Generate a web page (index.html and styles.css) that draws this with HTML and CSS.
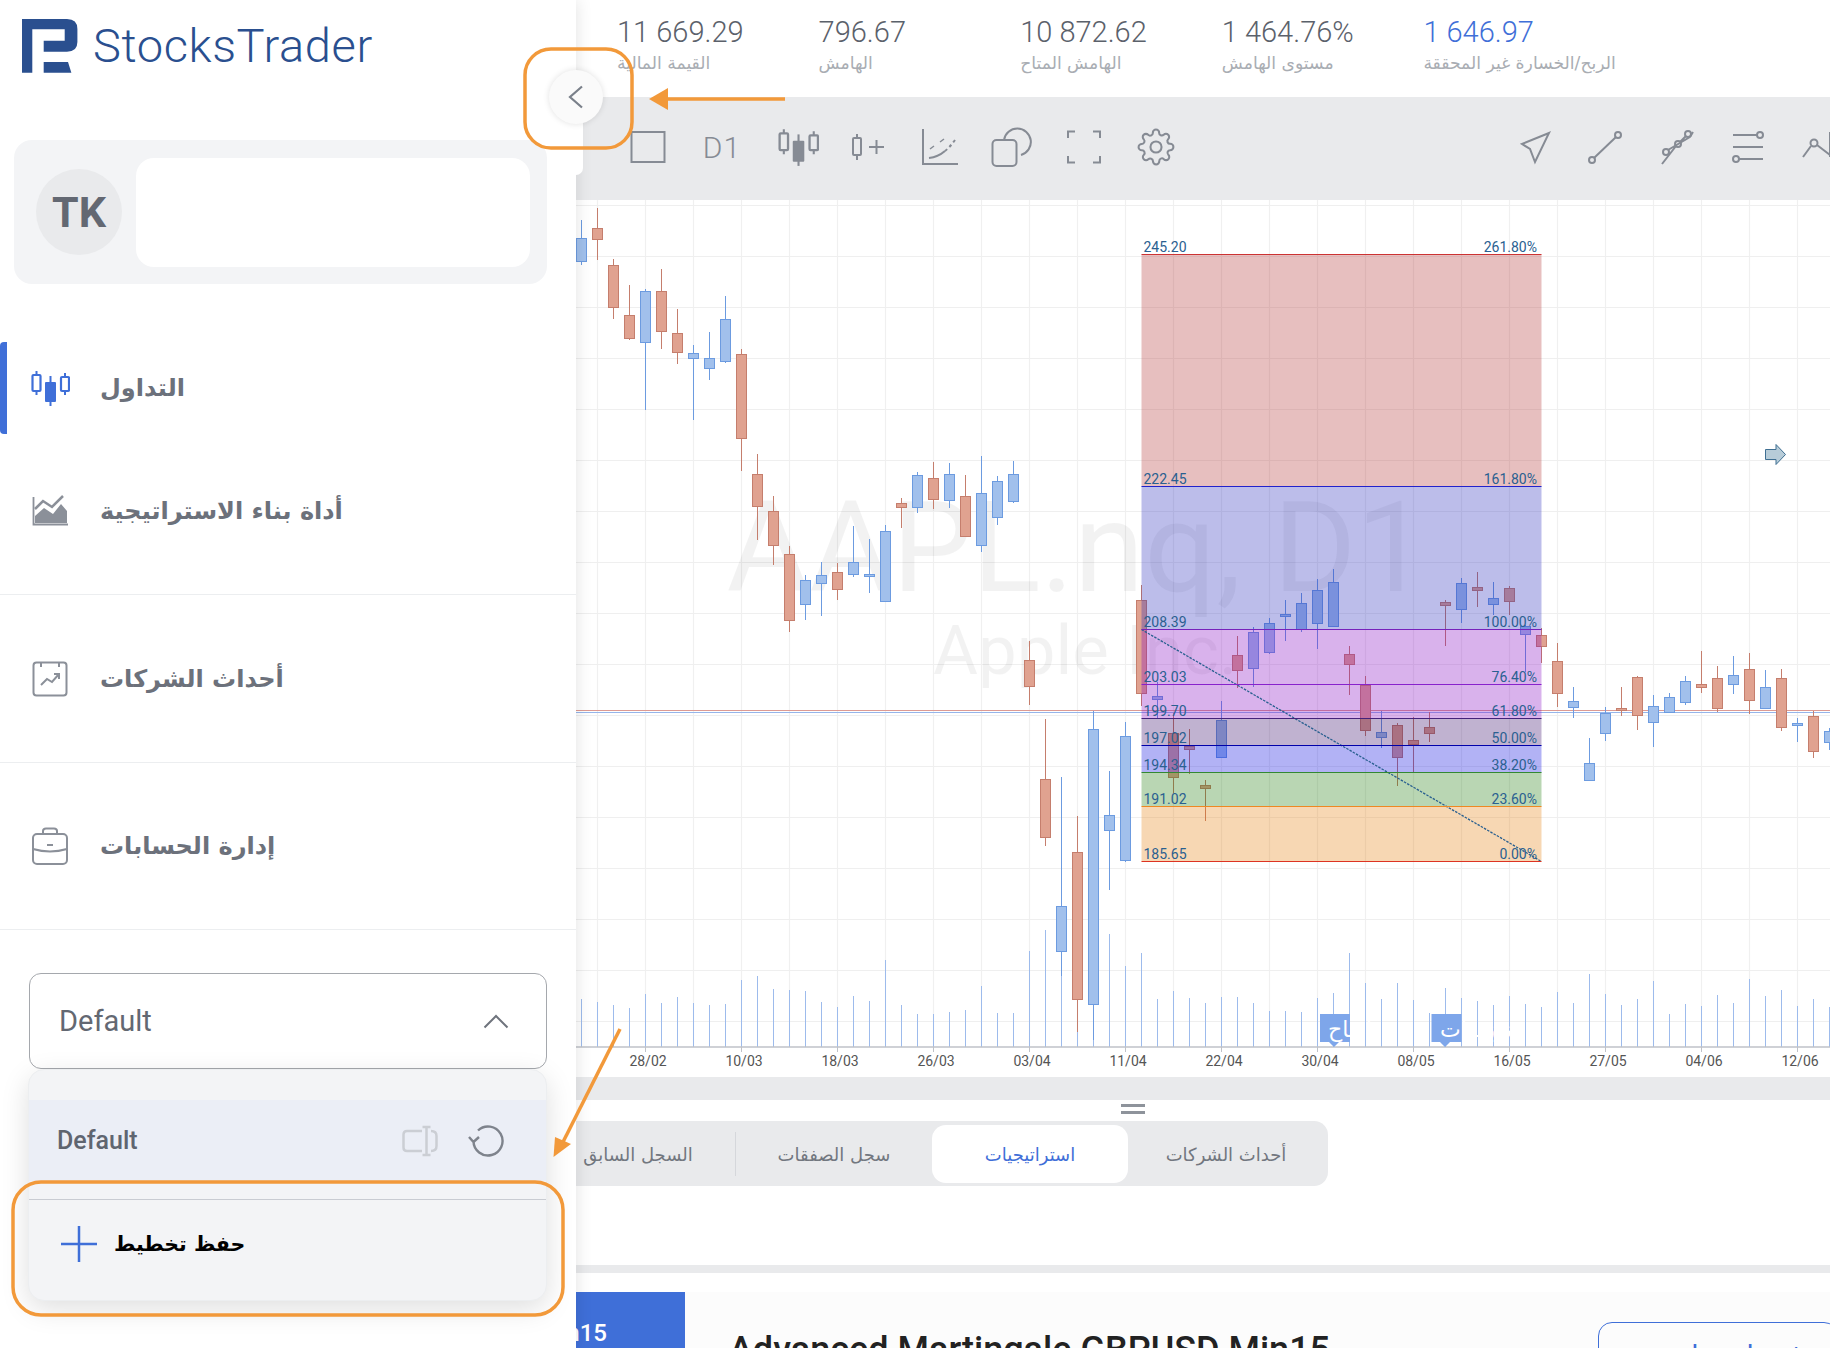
FILE: index.html
```html
<!DOCTYPE html>
<html lang="ar">
<head>
  <meta charset="UTF-8">
  <meta name="viewport" content="width=device-width, initial-scale=1.0">
  <title>StocksTrader</title>
  <link rel="stylesheet" href="styles.css">
</head>
<body>
  <svg class="icon-defs" width="0" height="0">
    <symbol id="ic-candles" viewBox="0 0 40 40">
      <path d="M6.5 3V7M6.5 23V27M35 5V9M35 23V27" fill="none" stroke="currentColor" stroke-width="2"/>
      <rect x="2.5" y="7" width="8" height="16" rx="1" fill="none" stroke="currentColor" stroke-width="2.2"/>
      <rect x="31" y="9" width="8" height="14" rx="1" fill="none" stroke="currentColor" stroke-width="2.2"/>
      <path d="M20.5 8V38" stroke="currentColor" stroke-width="2"/>
      <rect x="15" y="14" width="11" height="20" rx="1" fill="currentColor"/>
    </symbol>
  </svg>

  <aside class="sidebar">
    <div class="logo">
      <svg class="logo-mark" width="56" height="54" viewBox="0 0 56 54">
        <path d="M0 0H45Q55.4 0 55.4 10V23Q55.4 32.7 45 32.7H21.7V21.7H42.7V10.3H10.3V53.7H0Z"/>
        <path d="M21.7 43H46L49.4 53.7H21.7Z"/>
      </svg>
      <span class="logo-text">StocksTrader</span>
    </div>

    <div class="profile">
      <div class="avatar">TK</div>
      <div class="profile-box"></div>
    </div>

    <nav class="nav">
      <div class="nav-group">
        <a class="nav-item active">
          <svg class="nav-icon" width="40" height="40"><use href="#ic-candles"/></svg>
          <span dir="rtl">التداول</span>
        </a>
        <a class="nav-item">
          <svg class="nav-icon" width="40" height="40" viewBox="0 0 40 40">
            <path d="M3.500 6V33.500H38" fill="none" stroke="currentColor" stroke-width="1.800"/>
            <path d="M5 32V25L14 17L23 23L31 13L37 20V32Z" fill="currentColor"/>
            <path d="M5 18L13 10L22 16L33 5" fill="none" stroke="currentColor" stroke-width="2.500"/>
          </svg>
          <span dir="rtl">أداة بناء الاستراتيجية</span>
        </a>
      </div>
      <a class="nav-item nav-row">
        <svg class="nav-icon" width="40" height="40" viewBox="0 0 40 40">
          <rect x="3.500" y="3.500" width="33" height="33" rx="3" fill="none" stroke="currentColor" stroke-width="2"/>
          <path d="M11 3V8M29 3V8" stroke="currentColor" stroke-width="2"/>
          <path d="M11 26L17 20L22 23L29 15M24 15H29V20" fill="none" stroke="currentColor" stroke-width="2"/>
        </svg>
        <span dir="rtl">أحداث الشركات</span>
      </a>
      <a class="nav-item nav-row">
        <svg class="nav-icon" width="40" height="40" viewBox="0 0 40 40">
          <rect x="3" y="8" width="34" height="30" rx="4" fill="none" stroke="currentColor" stroke-width="2"/>
          <path d="M13 8V5Q13 2.500 16 2.500H24Q27 2.500 27 5V8M3 23Q20 28 37 23M17 19H23" fill="none" stroke="currentColor" stroke-width="2"/>
        </svg>
        <span dir="rtl">إدارة الحسابات</span>
      </a>
    </nav>

    <div class="layout-select">
      <div class="select-box">
        <span>Default</span>
        <svg width="26" height="15" viewBox="0 0 26 15"><path d="M1.500 13.500L13 2L24.500 13.500" fill="none" stroke="#6f747d" stroke-width="2"/></svg>
      </div>
      <div class="select-menu">
        <div class="menu-item">
          <span class="menu-name">Default</span>
          <svg class="rename" width="36" height="32" viewBox="0 0 36 32">
            <path d="M20 6H5Q1.500 6 1.500 9.500V22.500Q1.500 26 5 26H20M29 6Q34.500 6 34.500 11V21Q34.500 26 29 26M24.500 2V30M20.500 2H28.500M20.500 30H28.500" fill="none" stroke="#cbced4" stroke-width="2.500"/>
          </svg>
          <svg class="reset" width="36" height="32" viewBox="0 0 36 32">
            <path d="M5.500 16A14.500 14.500 0 1 0 10 5.500M1 12L5.500 17L11 12" fill="none" stroke="#7e838c" stroke-width="2.400"/>
          </svg>
        </div>
        <div class="menu-add">
          <svg width="36" height="36" viewBox="0 0 36 36"><path d="M18 0V36M0 18H36" stroke="#3f6fd8" stroke-width="2.500"/></svg>
          <span dir="rtl">حفظ تخطيط</span>
        </div>
      </div>
    </div>

    <div class="sidebar-tab"></div>
    <div class="collapse-btn">
      <svg width="16" height="24" viewBox="0 0 16 24"><path d="M14 1.500L2 12L14 22.500" fill="none" stroke="#7a808a" stroke-width="2.200"/></svg>
    </div>
  </aside>

  <main class="main">
    <header class="stats">
      <div class="stat"><div class="stat-value">11 669.29</div><div class="stat-label"><span dir="rtl">القيمة المالية</span></div></div>
      <div class="stat"><div class="stat-value">796.67</div><div class="stat-label"><span dir="rtl">الهامش</span></div></div>
      <div class="stat"><div class="stat-value">10 872.62</div><div class="stat-label"><span dir="rtl">الهامش المتاح</span></div></div>
      <div class="stat"><div class="stat-value">1 464.76%</div><div class="stat-label"><span dir="rtl">مستوى الهامش</span></div></div>
      <div class="stat"><div class="stat-value blue">1 646.97</div><div class="stat-label"><span dir="rtl">الربح/الخسارة غير المحققة</span></div></div>
    </header>

    <div class="toolbar">
      <div class="tool tool-first"><svg width="40" height="40" viewBox="0 0 40 40"><rect x="3.500" y="5" width="33" height="30"/></svg></div>
      <div class="tool tool-text">D1</div>
      <div class="tool"><svg class="filled-use" width="42" height="42"><use href="#ic-candles"/></svg></div>
      <div class="tool"><svg width="40" height="40" viewBox="0 0 40 40"><rect x="5" y="11" width="8" height="17" rx="1"/><path d="M9 7V11M9 28V33M21 20H36M28.500 13V27"/></svg></div>
      <div class="tool"><svg width="40" height="40" viewBox="0 0 40 40"><path d="M3 2V37H38"/><path d="M9 31Q18 30 25 24" /><path d="M25 24Q30 20 35 13" stroke-dasharray="3 3"/><path d="M10 22L14 19M20 15L24 12" stroke-width="1.500"/></svg></div>
      <div class="tool"><svg width="42" height="42" viewBox="0 0 42 42"><rect x="1.500" y="14" width="24" height="26" rx="4"/><path d="M13 14A13.500 13.500 0 1 1 30 29"/></svg></div>
      <div class="tool"><svg width="40" height="40" viewBox="0 0 40 40"><path d="M4 11V4.500H11M29 4.500H36V11M36 29V35.500H29M11 35.500H4V29"/></svg></div>
      <div class="tool"><svg width="38" height="38" viewBox="0 0 24 24" class="thin"><circle cx="12" cy="12" r="3.500"/><path d="M19.400 15a1.650 1.650 0 0 0 .33 1.820l.06.06a2 2 0 0 1 0 2.830 2 2 0 0 1-2.830 0l-.06-.06a1.650 1.650 0 0 0-1.820-.33 1.650 1.650 0 0 0-1 1.510V21a2 2 0 0 1-2 2 2 2 0 0 1-2-2v-.09A1.650 1.650 0 0 0 9 19.400a1.650 1.650 0 0 0-1.820.33l-.06.06a2 2 0 0 1-2.830 0 2 2 0 0 1 0-2.830l.06-.06a1.650 1.650 0 0 0 .33-1.820 1.650 1.650 0 0 0-1.510-1H3a2 2 0 0 1-2-2 2 2 0 0 1 2-2h.09A1.650 1.650 0 0 0 4.600 9a1.650 1.650 0 0 0-.33-1.820l-.06-.06a2 2 0 0 1 0-2.830 2 2 0 0 1 2.830 0l.06.06a1.650 1.650 0 0 0 1.820.33H9a1.650 1.650 0 0 0 1-1.510V3a2 2 0 0 1 2-2 2 2 0 0 1 2 2v.09a1.650 1.650 0 0 0 1 1.510 1.650 1.650 0 0 0 1.820-.33l.06-.06a2 2 0 0 1 2.830 0 2 2 0 0 1 0 2.830l-.06.06a1.650 1.650 0 0 0-.33 1.820V9a1.650 1.650 0 0 0 1.510 1H21a2 2 0 0 1 2 2 2 2 0 0 1-2 2h-.09a1.650 1.650 0 0 0-1.510 1z"/></svg></div>

      <div class="tools-right">
        <div class="tool"><svg width="40" height="40" viewBox="0 0 40 40"><path d="M35 6L8 17L16 22L21 35Z"/></svg></div>
        <div class="tool"><svg width="40" height="40" viewBox="0 0 40 40"><circle cx="7" cy="33" r="3"/><circle cx="33" cy="8" r="3"/><path d="M9 31L31 10"/></svg></div>
        <div class="tool"><svg width="40" height="40" viewBox="0 0 40 40"><circle cx="9" cy="25" r="3"/><circle cx="31" cy="7" r="3"/><circle cx="21" cy="17" r="3"/><path d="M5 37L19 19M23 15L29 9M11 23L33 10M33 10L36 5"/></svg></div>
        <div class="tool"><svg width="40" height="40" viewBox="0 0 40 40"><circle cx="32" cy="8" r="3"/><circle cx="8" cy="32" r="3"/><path d="M5 8H29M5 20H35M11 32H35"/></svg></div>
        <div class="tool"><svg width="40" height="40" viewBox="0 0 40 40"><circle cx="14" cy="16" r="3.500"/><path d="M3 30L11 19M17 18L30 28M30 5V30"/></svg></div>
      </div>
    </div>

    <section class="chart">
      <svg id="chart-svg" width="1254" height="877" viewBox="576 200 1254 877"></svg>
    </section>

    <div class="band"></div>

    <section class="panel">
      <div class="handle"></div>
      <div class="tabs" dir="rtl">
        <div class="tab">أحداث الشركات</div>
        <div class="tab active">استراتيجيات</div>
        <div class="tab">سجل الصفقات</div>
        <div class="tab tab-sep">السجل السابق</div>
      </div>
    </section>

    <div class="band thin"></div>

    <section class="strategy">
      <div class="strategy-badge"><span>Min15</span></div>
      <div class="strategy-title">Advanced Martingale GBPUSD Min15</div>
      <div class="strategy-btn" dir="rtl">فتح استراتيجية</div>
    </section>
  </main>

  <!-- help arrows and frames drawn over the screenshot -->
  <svg class="marks" width="1830" height="1348" viewBox="0 0 1830 1348">
    <rect x="525" y="49" width="107" height="99" rx="26"/>
    <rect x="13" y="1182" width="550" height="133" rx="28"/>
    <path d="M785 99H664"/>
    <path class="head" d="M649 99L668 88V110Z"/>
    <path d="M620 1029L563 1142"/>
    <path class="head" d="M553.500 1157L571 1144L555 1137Z"/>
  </svg>

  <script src="chart.js"></script>
</body>
</html>
```

FILE: styles.css
```css
* {
  box-sizing: border-box;
}
html, body {
  margin: 0;
  height: 1348px;
  overflow: hidden;
}
body {
  display: flex;
  position: relative;
  background-color: white;
  color: #5f6570;
  font-family: Roboto, "DejaVu Sans", sans-serif;
}
.icon-defs {
  position: absolute;
}

/* sidebar */
.sidebar {
  position: relative;
  z-index: 2;
  flex: 0 0 576px;
  background-color: white;
  box-shadow: 0 0 16px rgba(0, 0, 0, 0.12);
}
.logo {
  display: flex;
  align-items: flex-start;
  gap: 15px;
  height: 140px;
  padding: 19px 0 0 22px;
}
.logo-mark {
  fill: #2a4f8f;
}
.logo-text {
  color: #2a4f8f;
  font-size: 47px;
  font-weight: 300;
  line-height: 54px;
  letter-spacing: 0.6px;
}
.profile {
  display: flex;
  align-items: center;
  gap: 14px;
  height: 144px;
  margin-left: 14px;
  width: 533px;
  padding: 0 17px 0 22px;
  background-color: #f3f4f6;
  border-radius: 18px;
}
.avatar {
  display: flex;
  align-items: center;
  justify-content: center;
  flex: 0 0 86px;
  height: 86px;
  border-radius: 50%;
  background-color: #e9eaec;
  color: #636872;
  font-size: 43px;
  font-weight: 700;
}
.profile-box {
  flex: 1;
  height: 109px;
  background-color: white;
  border-radius: 18px;
}
.nav {
  margin-top: 58px;
}
.nav-group {
  display: flex;
  flex-direction: column;
  gap: 31px;
  padding-bottom: 37px;
}
.nav-item {
  display: flex;
  align-items: center;
  gap: 30px;
  height: 92px;
  padding-left: 30px;
  font-family: "DejaVu Sans", sans-serif;
  font-size: 24px;
  font-weight: 700;
  color: #6c717b;
}
.nav-item.active {
  border-left: 7px solid #3f6fd8;
  border-radius: 4px 0 0 4px;
  padding-left: 23px;
}
.nav-row {
  height: 168px;
  border-top: 1px solid #eceef0;
}
.nav-row + .nav-row {
  border-bottom: 1px solid #eceef0;
}
.nav-icon {
  flex: none;
  color: #8b9099;
}
.active .nav-icon {
  color: #3f6fd8;
}

/* layout dropdown */
.layout-select {
  position: relative;
  margin: 43px 29px 0;
}
.select-box {
  display: flex;
  align-items: center;
  justify-content: space-between;
  height: 96px;
  padding: 0 37px 0 29px;
  border: 1px solid #a5a8ad;
  border-radius: 12px;
  font-size: 29px;
  color: #636872;
}
.select-menu {
  position: absolute;
  top: 96px;
  left: -1px;
  right: 0;
  height: 232px;
  padding-top: 30px;
  background-color: #f3f4f6;
  border: 1px solid #eceef0;
  border-radius: 16px;
  box-shadow: 0 8px 28px rgba(0, 0, 0, 0.13);
}
.menu-item {
  display: flex;
  align-items: center;
  height: 81px;
  padding: 0 42px 0 28px;
  background-color: #ebeef6;
  font-size: 25px;
  font-weight: 500;
  color: #5f6570;
}
.menu-name {
  flex: 1;
}
.reset {
  margin-left: 30px;
}
.menu-add {
  display: flex;
  align-items: center;
  gap: 17px;
  margin-top: 18px;
  height: 88px;
  padding-left: 32px;
  border-top: 1px solid #c9ccd2;
  font-family: "DejaVu Sans", sans-serif;
  font-size: 20.5px;
  font-weight: 700;
  color: black;
}

/* collapse button */
.sidebar-tab {
  position: absolute;
  top: 97px;
  left: 100%;
  width: 7px;
  height: 78px;
  background-color: white;
  border-radius: 0 0 8px 0;
}
.collapse-btn {
  position: absolute;
  top: 70px;
  left: 549px;
  display: flex;
  align-items: center;
  justify-content: center;
  width: 54px;
  height: 54px;
  padding-right: 1px;
  border-radius: 50%;
  background-color: #fafafa;
  box-shadow: 0 0 6px rgba(0, 0, 0, 0.12);
}

/* main column */
.main {
  flex: 1;
  min-width: 0;
  display: flex;
  flex-direction: column;
}
.main > * {
  flex: none;
}
.stats {
  display: grid;
  grid-template-columns: repeat(5, 201.6px);
  height: 97px;
  padding: 15px 0 0 41px;
}
.stat-value {
  font-size: 29px;
  line-height: 34px;
  font-weight: 300;
  color: #5b616b;
}
.stat-value.blue {
  color: #3f6fd8;
}
.stat-label {
  margin-top: 2px;
  font-family: "DejaVu Sans", sans-serif;
  font-size: 17.2px;
  line-height: 24px;
  color: #a9adb3;
}
.toolbar {
  display: flex;
  align-items: center;
  height: 103px;
  padding: 0 0 3px 36px;
  background-color: #e9eaec;
  overflow: hidden;
}
.tool {
  display: flex;
  align-items: center;
  justify-content: center;
  flex: 0 0 72px;
  color: #868b94;
}
.tool-first {
  margin-right: 2px;
}
.tool svg {
  fill: none;
  stroke: #868b94;
  stroke-width: 2;
}
.tool .thin {
  stroke-width: 1.3;
}
.tool .filled-use {
  stroke: none;
  margin-left: 3px;
}
.tool-text {
  font-size: 30px;
  font-weight: 300;
  letter-spacing: 1px;
  margin-right: 2px;
}
.tools-right {
  display: flex;
  flex: none;
  margin-left: 306px;
}
.tools-right .tool {
  flex-basis: 71.5px;
}
.chart {
  height: 877px;
}
.chart svg {
  display: block;
}
.band {
  height: 23px;
  background-color: #e9eaec;
}
.band.thin {
  height: 8px;
}
.panel {
  position: relative;
  height: 165px;
  padding-top: 21px;
}
.handle {
  position: absolute;
  top: 4px;
  left: 545px;
  width: 24px;
  height: 10px;
  border-top: 3px solid #8e939b;
  border-bottom: 3px solid #8e939b;
}
.tabs {
  display: flex;
  width: 792px;
  height: 65px;
  margin-left: -40px;
  padding: 4px;
  background-color: #e9eaec;
  border-radius: 14px;
  font-family: "DejaVu Sans", sans-serif;
  font-size: 18px;
  color: #72777f;
}
.tab {
  position: relative;
  display: flex;
  align-items: center;
  justify-content: center;
  flex: 0 0 196px;
  height: 58px;
}
.tab.active {
  background-color: white;
  border-radius: 14px;
  color: #3f6fd8;
}
.tab-sep::after {
  content: "";
  position: absolute;
  top: 7px;
  bottom: 7px;
  right: 0;
  border-right: 1px solid #d5d7db;
}
.strategy {
  display: flex;
  margin-top: 19px;
  height: 120px;
  background-color: #fcfcfc;
}
.strategy-badge {
  display: flex;
  justify-content: flex-end;
  flex: 0 0 109px;
  min-width: 0;
  width: 109px;
  padding: 27px 78px 0 0;
  background-color: #3f6fd8;
  color: white;
  font-size: 24px;
  font-weight: 500;
}
.strategy-title {
  flex: none;
  margin: 37px 0 0 44px;
  color: #222;
  font-size: 36px;
  font-weight: 500;
}
.strategy-btn {
  flex: none;
  display: flex;
  align-items: center;
  justify-content: center;
  margin: 30px -8px 0 auto;
  width: 240px;
  height: 66px;
  border: 1px solid #3f6fd8;
  border-radius: 14px;
  font-family: "DejaVu Sans", sans-serif;
  font-size: 28px;
  color: #3f6fd8;
}

/* orange help marks */
.marks {
  position: absolute;
  top: 0;
  left: 0;
  z-index: 3;
  fill: none;
  stroke: #f2993a;
  stroke-width: 3.5;
  pointer-events: none;
}
.marks .head {
  fill: #f2993a;
  stroke: none;
}
```

FILE: chart.js
```js
// candles: [high, bodyTop, bodyBottom, low, up?]  1 = blue, 0 = red
const candles = [
  [220,238,261,265,1],[208,228,239,260,0],[259,265,307,319,0],[285,315,338,340,0],[289,291,342,410,1],
  [269,291,331,349,0],[309,333,352,364,0],[345,353,358,420,1],[332,358,368,380,1],[296,319,361,363,1],
  [349,354,438,471,0],[454,474,506,540,0],[496,511,545,565,0],[546,554,620,632,0],[575,580,604,620,1],
  [562,575,583,616,1],[563,572,589,600,0],[526,562,574,577,1],[539,574,576,593,1],[525,531,601,602,1],
  [498,503,507,528,0],[472,475,507,513,1],[462,478,499,509,0],[463,474,500,508,1],[475,496,536,537,0],
  [456,493,545,552,1],[476,481,517,525,1],[461,474,501,503,1],[641,660,686,705,0],[719,779,837,846,0],
  [777,906,951,976,1],[816,852,999,1032,0],[711,729,1004,1040,1],[771,815,830,890,1],[722,736,860,862,1],
  [585,600,693,706,0],[682,696,699,718,1],[713,733,777,793,0],[729,746,749,774,0],[780,785,788,821,0],
  [701,720,757,757,1],[636,655,670,688,0],[627,632,668,687,1],[618,623,652,654,1],[600,614,616,641,1],
  [593,603,629,632,1],[579,590,623,649,1],[569,582,626,627,1],[646,654,664,695,0],[676,685,730,736,0],
  [711,732,737,748,1],[723,725,757,786,0],[717,740,744,772,0],[712,727,733,742,0],[600,602,605,646,0],
  [578,583,609,623,1],[572,587,590,607,0],[582,598,604,615,1],[586,588,601,615,0],[625,626,634,672,1],
  [628,635,646,663,0],[643,661,693,707,0],[687,701,707,718,1],[738,763,780,781,1],[707,713,733,741,1],
  [687,708,710,716,0],[676,677,715,730,0],[695,706,722,747,1],[693,697,712,713,1],[676,681,702,705,1],
  [651,684,687,693,0],[666,678,708,712,0],[656,675,684,694,1],[653,669,700,714,0],[670,687,708,708,1],
  [669,678,727,731,0],[718,723,725,742,1],[711,716,751,758,0],[728,731,742,750,1]
];

const volumes = [
  999,1002,1005,1008,994,1003,997,1003,1005,1004,980,976,989,990,991,1002,1007,996,1001,960,
  1005,1014,1014,1012,1010,986,1013,1013,951,930,976,1031,990,934,966,953,999,991,998,1003,
  997,997,1003,1011,1011,1012,998,993,953,983,999,983,1000,1013,988,998,1001,1005,996,1004,
  1007,992,1003,974,994,1005,999,981,1014,1004,1006,995,1003,979,996,990,1006,999,1007
];

const fibZones = [
  [254.5, 486.5, 'rgba(175,42,42,.3)', '#cc3333', '245.20', '261.80%'],
  [486.5, 629.5, 'rgba(32,35,185,.3)', '#2222cc', '222.45', '161.80%'],
  [629.5, 684.5, 'rgba(128,0,192,.3)', '#7722bb', '208.39', '100.00%'],
  [684.5, 718.5, 'rgba(128,0,192,.3)', '#8822cc', '203.03', '76.40%'],
  [718.5, 745.5, 'rgba(48,0,98,.3)', '#44227a', '199.70', '61.80%'],
  [745.5, 772.5, 'rgba(0,0,222,.3)', '#0000aa', '197.02', '50.00%'],
  [772.5, 806.5, 'rgba(22,118,2,.3)', '#338833', '194.34', '38.20%'],
  [806.5, 861.5, 'rgba(228,122,2,.3)', '#ee8822', '191.02', '23.60%'],
  [861.5, 861.5, 'none', '#dd3322', '185.65', '0.00%']
];

const dates = ['28/02','10/03','18/03','26/03','03/04','11/04','22/04','30/04','08/05','16/05','27/05','04/06','12/06'];

function line(x1, y1, x2, y2, color, extra) {
  return `<line x1="${x1}" y1="${y1}" x2="${x2}" y2="${y2}" stroke="${color}" ${extra || ''}/>`;
}

function text(x, y, value, attrs) {
  return `<text x="${x}" y="${y}" ${attrs}>${value}</text>`;
}

let out = '';

// grid
for (let x = 597.5; x < 1830; x += 48) out += line(x, 200, x, 1047, '#f0f0f0', 'stroke-width="1.2"');
for (let y = 205.5; y < 1047; y += 51) out += line(576, y, 1830, y, '#efefef', 'stroke-width="1.2"');

// watermark
const wm = 'font-family="Roboto" fill="#000" fill-opacity=".05" text-anchor="middle"';
out += text(1077, 591, 'AAPL.nq, D1', wm + ' font-size="127"');
out += text(1085, 674, 'Apple Inc.', wm + ' font-size="69"');

// volume
volumes.forEach((top, i) => {
  const x = 581.5 + 16 * i;
  out += line(x, top, x, 1047, '#9dbbec');
});

// price lines
out += line(576, 710.5, 1830, 710.5, '#dc9b94', 'stroke-width="1.2"');
out += line(576, 712.5, 1830, 712.5, '#96b5ea');

// candles
candles.forEach((c, i) => {
  const x = 581.5 + 16 * i;
  const border = c[4] ? '#6c9be0' : '#c57e6d';
  const fill = c[4] ? '#a1c0ec' : '#e0a290';
  out += line(x, c[0], x, c[3], border);
  out += `<rect x="${x - 5}" y="${c[1] + 0.5}" width="10" height="${c[2] - c[1]}" fill="${fill}" stroke="${border}"/>`;
});

// fibonacci tool
const fibLeft = 1141.5;
const fibRight = 1541.5;
fibZones.forEach(z => {
  if (z[2] !== 'none') out += `<rect x="${fibLeft}" y="${z[0]}" width="${fibRight - fibLeft}" height="${z[1] - z[0]}" fill="${z[2]}"/>`;
});
out += line(fibLeft, 629.5, fibRight, 861.5, '#2a6090', 'stroke-width="1.3" stroke-dasharray="2.500 1.200"');
fibZones.forEach(z => {
  out += line(fibLeft, z[0], fibRight, z[0], z[3]);
  const label = 'font-family="Roboto" font-size="14" fill="#2a6090"';
  out += text(1143.5, z[0] - 3, z[4], label);
  out += text(1537, z[0] - 3, z[5], label + ' text-anchor="end"');
});

// scroll arrow on the right
out += '<path d="M1765.500 449.500H1776V444.500L1785.500 454.500L1776 464.500V459.500H1765.500Z" fill="#b7ccd8" stroke="#3f6f92"/>';

// time axis
out += line(576, 1047, 1830, 1047, '#bfc2c8', 'stroke-width="1.500"');
dates.forEach((d, i) => {
  const x = 645.5 + 96 * i;
  out += line(x, 1047, x, 1052, '#bfc2c8');
  out += text(x + 2.5, 1066, d, 'font-family="Roboto" font-size="14" fill="#555" text-anchor="middle"');
});

// event markers, their labels run past the box like on the real chart
[[1320, 1334, 'أرباح', 1328], [1431.5, 1445, 'توزيعات', 1440]].forEach(m => {
  out += `<path d="M${m[0]} 1014H${m[0] + 30}V1042H${m[1] + 5}L${m[1]} 1047L${m[1] - 5} 1042H${m[0]}Z" fill="#7ea6ea"/>`;
  out += text(m[3], 1037, m[2], 'font-family="DejaVu Sans" font-size="22" fill="white" direction="rtl" text-anchor="end"');
});

document.getElementById('chart-svg').innerHTML = out;
```
